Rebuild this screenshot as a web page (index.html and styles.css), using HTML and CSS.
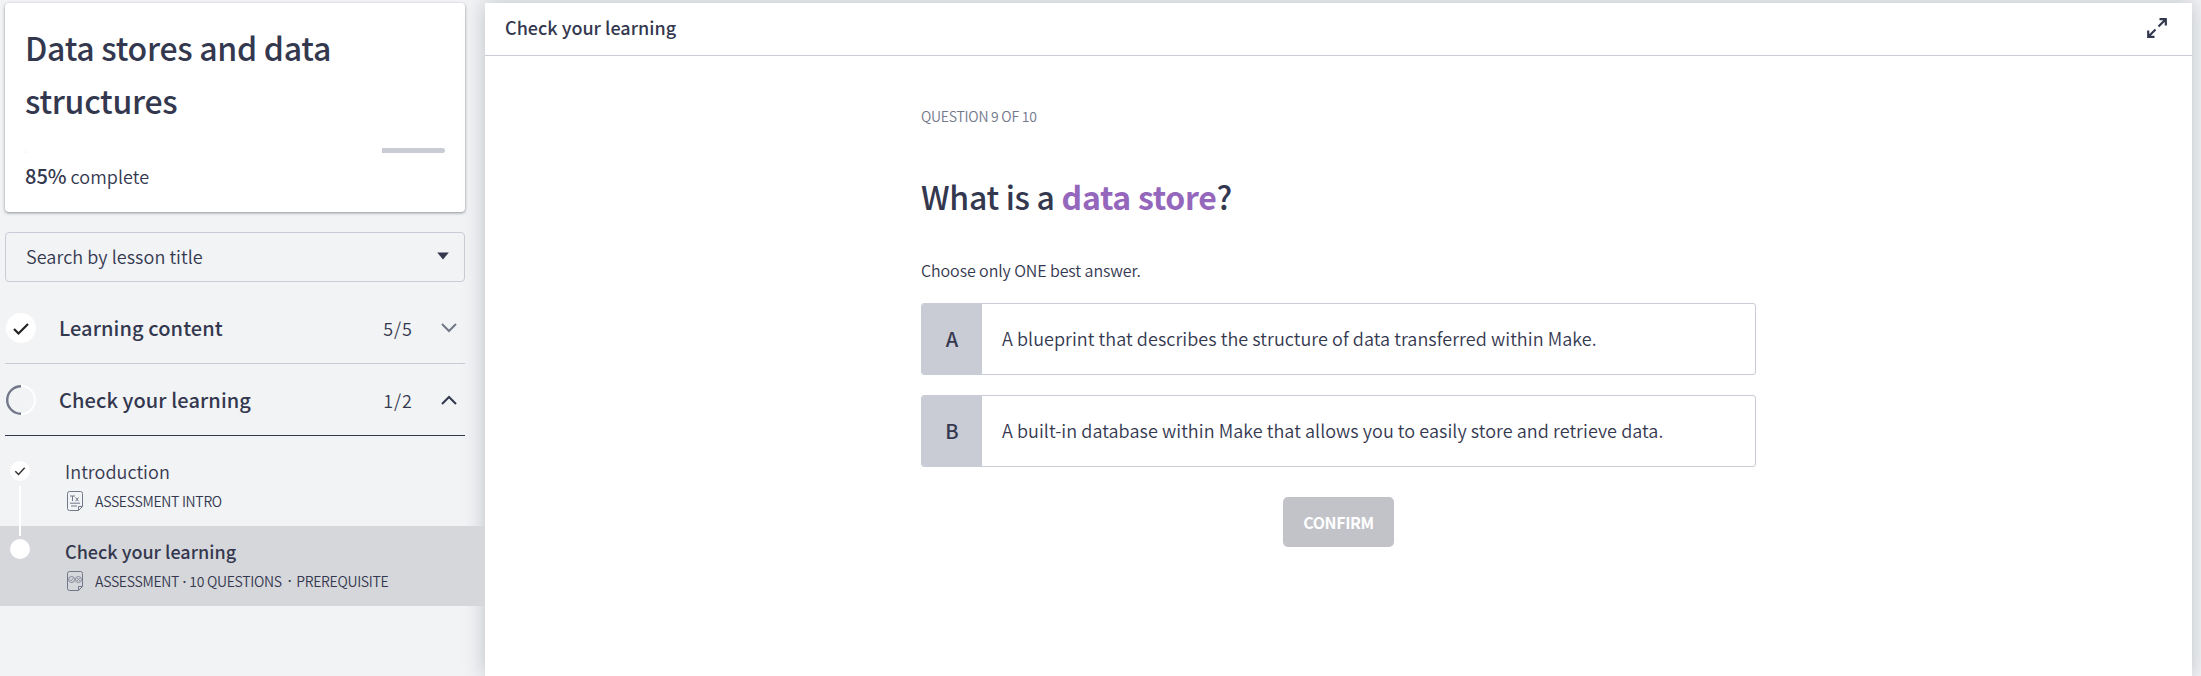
FILE: index.html
```html
<!DOCTYPE html>
<html lang="en">
<head>
<meta charset="utf-8">
<title>Data stores and data structures</title>
<link rel="stylesheet" href="styles.css">
</head>
<body>
<div class="app">
  <aside class="sidebar">
    <section class="course-card">
      <h1 class="course-title">Data stores and data structures</h1>
      <div class="progress"><div class="progress-fill" style="width:85%"></div></div>
      <p class="progress-label"><strong class="percent">85%</strong> <span class="complete">complete</span></p>
    </section>
    <div class="search">
      <span class="search-text">Search by lesson title</span>
      <svg class="caret" viewBox="0 0 12 8"><path d="M.2.5h11.6L6 7.5z" fill="#34384f"/></svg>
    </div>
    <div class="chapter">
      <svg class="status" viewBox="0 0 30 30"><circle cx="15" cy="15" r="15" fill="#fff"/><path d="M8 16l4.5 4.5L22 11" fill="none" stroke="#222" stroke-width="2.2"/></svg>
      <h2 class="chapter-title">Learning content</h2>
      <span class="count">5/5</span>
      <svg class="chevron" viewBox="0 0 16 10"><path d="M1 1l7 7 7-7" fill="none" stroke="#73778a" stroke-width="2"/></svg>
    </div>
    <div class="chapter open">
      <svg class="status" viewBox="0 0 30 30"><path d="M15 1a14 14 0 0 1 0 28" fill="none" stroke="#fff" stroke-width="2"/><path d="M15 1.2a13.8 13.8 0 0 0 0 27.6" fill="none" stroke="#73778a" stroke-width="2.4"/></svg>
      <h2 class="chapter-title">Check your learning</h2>
      <span class="count">1/2</span>
      <svg class="chevron" viewBox="0 0 16 10"><path d="M1 9l7-7 7 7" fill="none" stroke="#34384f" stroke-width="2"/></svg>
    </div>
    <ul class="lessons">
      <li class="lesson">
        <svg class="dot" viewBox="0 0 20 20"><circle cx="10" cy="10" r="10" fill="#fff"/><path d="M5.3 10.3l3.2 3.2 6.2-6.7" fill="none" stroke="#333" stroke-width="1.5"/></svg>
        <div class="lesson-body">
          <h3 class="lesson-title">Introduction</h3>
          <div class="meta">
            <svg class="doc" viewBox="0 0 16 20"><path d="M11.5 19.5H2.5a2 2 0 0 1-2-2v-15a2 2 0 0 1 2-2h11a2 2 0 0 1 2 2v13zM11.5 19.5v-4h4M3 12.2h10M4 15h6M3 5h5M5.5 5v5M8.5 6.5l3 3.7M11.5 6.5l-3 3.7" fill="none" stroke="currentColor"/></svg>
            <span>ASSESSMENT INTRO</span>
          </div>
        </div>
        <span class="connector"></span>
      </li>
      <li class="lesson current">
        <svg class="dot" viewBox="0 0 20 20"><circle cx="10" cy="10" r="10" fill="#fff"/></svg>
        <div class="lesson-body">
          <h3 class="lesson-title">Check your learning</h3>
          <div class="meta">
            <svg class="doc" viewBox="0 0 16 20"><path d="M11.5 19.5H2.5a2 2 0 0 1-2-2v-15a2 2 0 0 1 2-2h11a2 2 0 0 1 2 2v13zM11.5 19.5v-4h4" fill="none" stroke="currentColor"/><g fill="none" stroke="currentColor" stroke-width=".8"><circle cx="4.6" cy="8.5" r="3"/><circle cx="11.4" cy="8.5" r="3"/><path d="M3 8.5l1.3 1.3L6.3 7.3M10 7.1l2.8 2.8M12.8 7.1L10 9.9"/></g></svg>
            <span>ASSESSMENT<span class="sep"> · </span>10 QUESTIONS</span><span class="sep wide">·</span><span>PREREQUISITE</span>
          </div>
        </div>
      </li>
    </ul>
  </aside>
  <main class="panel">
    <header class="panel-header">
      <h2 class="panel-title">Check your learning</h2>
      <svg class="expand" viewBox="0 0 20 20"><path d="M11.5 8.5l7-7M12.5 1.2h6.3v6.3M8.5 11.5l-7 7M1.2 12.5v6.3h6.3" fill="none" stroke="#34384f" stroke-width="2.2"/></svg>
    </header>
    <section class="quiz">
      <p class="counter">QUESTION 9 OF 10</p>
      <h1 class="question">What is a <strong class="term">data store</strong>?</h1>
      <p class="hint">Choose only ONE best answer.</p>
      <div class="answer"><span class="letter">A</span><span class="answer-text">A blueprint that describes the structure of data transferred within Make.</span></div>
      <div class="answer"><span class="letter">B</span><span class="answer-text">A built-in database within Make that allows you to easily store and retrieve data.</span></div>
      <button class="confirm">CONFIRM</button>
    </section>
  </main>
</div>
</body>
</html>
```
FILE: styles.css
```css
* { box-sizing: border-box; margin: 0; padding: 0; }
body {
  font-family: "Noto Sans CJK SC", "Noto Sans", sans-serif;
  font-size: 18px;
  font-weight: 350;
  color: #34384f;
  background: #f1f3f5;
  overflow: hidden;
}
svg { display: block; flex: none; overflow: visible; }
.app { display: flex; height: 676px; padding-top: 3px; }

.sidebar { width: 485px; flex: none; }
.course-card {
  width: 460px;
  height: 209px;
  margin-left: 5px;
  padding: 18px 20px 0 20px;
  background: #fff;
  border-radius: 4px;
  box-shadow: 0 1px 3px rgba(40, 42, 50, .5);
}
.course-title { font-size: 32px; line-height: 53px; font-weight: 500; letter-spacing: -.28px; }
.progress { height: 5px; margin-top: 21px; border-radius: 3px; background: #c9cbd5; overflow: hidden; }
.progress-fill { height: 5px; background: #fff; }
.progress-label { margin-top: 11px; line-height: 24px; white-space: nowrap; }
.percent { font-size: 20px; font-weight: 500; }
.complete { letter-spacing: .05px; }
.search {
  display: flex;
  align-items: center;
  justify-content: space-between;
  width: 460px;
  height: 50px;
  margin: 20px 0 0 5px;
  padding: 0 15px 3px 20px;
  border: 1px solid #c9cbd5;
  border-radius: 4px;
}
.search-text { letter-spacing: .06px; }
.caret { width: 12px; height: 8px; }
.chapter {
  display: flex;
  align-items: center;
  width: 460px;
  height: 72px;
  margin-left: 5px;
  padding-right: 8px;
  border-bottom: 1px solid #c9cbd5;
}
.search + .chapter { height: 82px; padding-top: 10px; }
.chapter.open { border-color: #34384f; }
.status { width: 30px; height: 30px; margin-left: 1px; }
.chapter-title { flex: 1; margin: 0 0 0 23px; font-size: 20px; line-height: 28px; font-weight: 500; letter-spacing: .1px; white-space: nowrap; }
.count { margin: 0 28px 0 0; line-height: 28px; letter-spacing: 1px; }
.chevron { width: 16px; height: 10px; }

.lessons { list-style: none; padding-top: 10px; }
.lesson { position: relative; display: flex; height: 80px; padding: 15px 0 0 10px; }
.dot { width: 20px; height: 20px; }
.current .dot { margin-top: -2px; }
.current { background: #d6d7db; }
.connector { position: absolute; z-index: 1; left: 19px; top: 40px; width: 2px; height: 50px; background: #fff; }
.lesson-body { margin: -2px 0 0 35px; }
.lesson-title { font-size: 18px; line-height: 24px; font-weight: 350; letter-spacing: .05px; white-space: nowrap; }
.current .lesson-title { font-weight: 500; letter-spacing: 0; }
.meta { display: flex; align-items: center; height: 24px; margin: 6px 0 0 2px; font-size: 14px; line-height: 20px; letter-spacing: -.3px; white-space: nowrap; }
.doc { width: 16px; height: 20px; margin-right: 12px; color: #73778a; }
.sep { font-family: "Open Sans", sans-serif; font-weight: 600; }
.sep.wide { margin: 0 5px 0 6px; }

.panel { width: 1707px; flex: none; background: #fff; box-shadow: 0 0 20px rgba(40, 42, 50, .25); }
.panel-header {
  display: flex;
  align-items: center;
  justify-content: space-between;
  height: 53px;
  padding: 0 25px 3px 20px;
  border-bottom: 1px solid #c9cbd5;
}
.panel-title { margin-top: -1px; font-size: 18px; line-height: 24px; font-weight: 500; }
.expand { width: 20px; height: 20px; }
.quiz { display: flex; flex-direction: column; width: 835px; margin: 0 auto; white-space: nowrap; }
.counter { margin-top: 50px; font-size: 14px; line-height: 20px; letter-spacing: -.25px; color: #73778a; }
.question { margin-top: 50px; font-size: 32px; line-height: 40px; font-weight: 500; letter-spacing: -.3px; }
.term { font-weight: 700; color: #9467bd; }
.hint { margin-top: 42px; font-size: 16px; line-height: 24px; letter-spacing: -.1px; }
.answer { display: flex; height: 72px; margin-bottom: 20px; border: 1px solid #c9cbd5; border-radius: 3px; overflow: hidden; }
.hint + .answer { margin-top: 21px; }
.letter { display: flex; align-items: center; justify-content: center; width: 60px; padding-bottom: 2px; background: #c9cbd5; font-size: 20px; font-weight: 500; }
.answer-text { margin-left: 20px; line-height: 68px; letter-spacing: .055px; }
.confirm {
  align-self: center;
  width: 111px;
  height: 50px;
  margin-top: 10px;
  border: 0;
  border-radius: 5px;
  background: #c2c3c9;
  color: #fff;
  font: 700 16px/48px "Noto Sans CJK SC", sans-serif;
  letter-spacing: -.4px;
}
```
